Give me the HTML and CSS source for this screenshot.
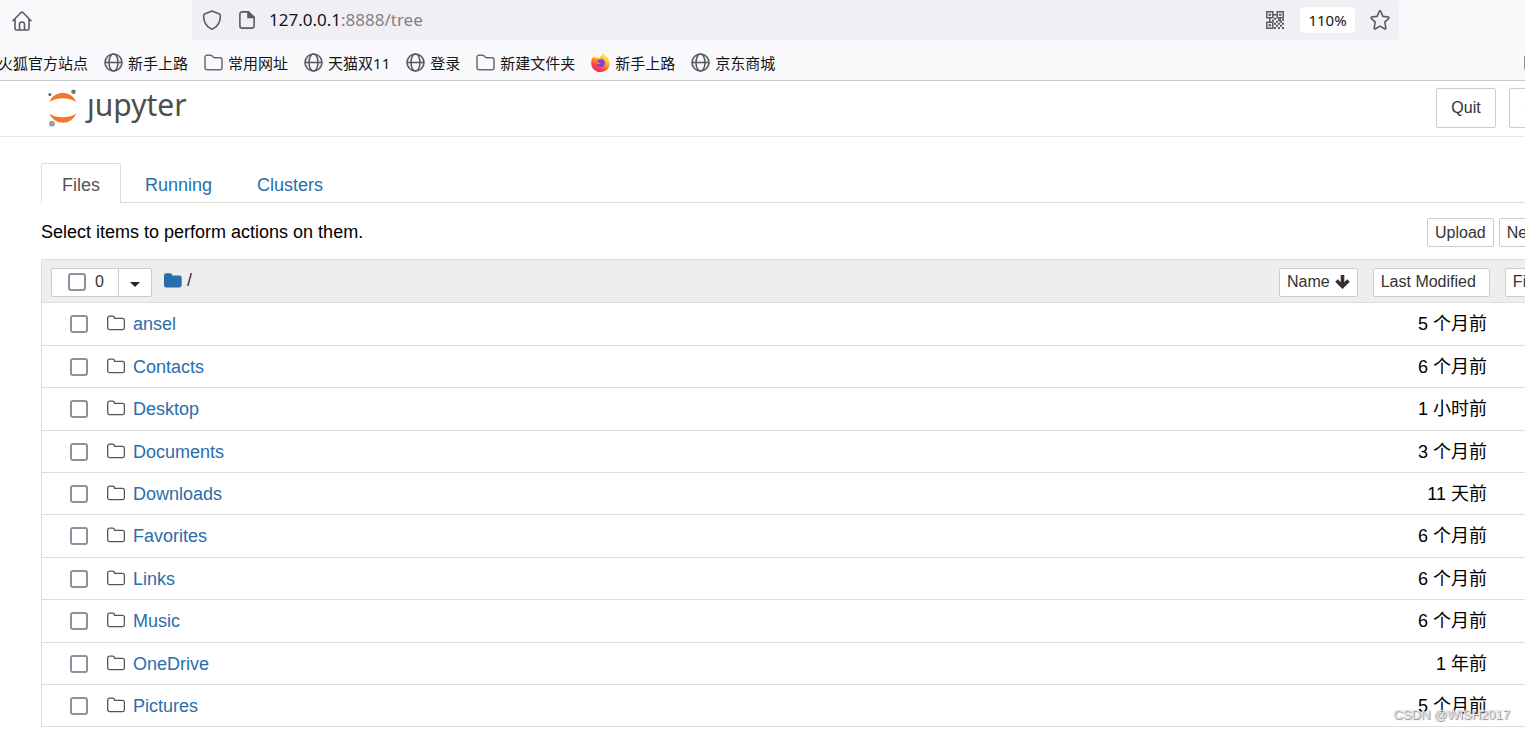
FILE: index.html
```
<!DOCTYPE html>
<html lang="zh-CN">
<head>
<meta charset="utf-8">
<title>Home Page - Select or create a notebook</title>
<link rel="stylesheet" href="styles.css">
</head>
<body>
<svg class="defs" aria-hidden="true">
  <symbol id="globe" viewBox="0 0 19 19"><g fill="none" stroke="#5b5b66" stroke-width="1.6"><circle cx="9.5" cy="9.5" r="8.5"/><ellipse cx="9.5" cy="9.5" rx="4.500" ry="8.5"/><path d="M1 9.5h17"/></g></symbol>
  <symbol id="dir" viewBox="0 0 19 19"><path d="M1 4.200a2 2 0 0 1 2-2h3.600q.8 0 1.400.6l1.400 1.400q.6.600 1.400.6H16a2 2 0 0 1 2 2v8a2 2 0 0 1-2 2H3a2 2 0 0 1-2-2z" fill="none" stroke="#6a6a74" stroke-width="1.500"/></symbol>
  <symbol id="folder-o" viewBox="0 0 18 16"><path d="M.7 3a1.900 1.900 0 0 1 1.900-1.900h3A1.900 1.900 0 0 1 7.500 3v.3h8a1.900 1.900 0 0 1 1.900 1.900v7.500a1.900 1.900 0 0 1-1.900 1.900H2.600a1.900 1.900 0 0 1-1.900-1.900z" fill="none" stroke="#555" stroke-width="1.300"/></symbol>
</svg>

<header class="chrome">
  <div class="nav-bar">
    <button class="icon-btn home" aria-label="Home">
      <svg width="20" height="20" viewBox="0 0 20 20" fill="none" stroke="#5b5b66" stroke-width="1.600" stroke-linejoin="round" stroke-linecap="round"><path d="M1 9.700 8.800 1.700a1.700 1.700 0 0 1 2.400 0L19 9.700M3 8v9.500a1.500 1.500 0 0 0 1.500 1.500h11a1.500 1.500 0 0 0 1.500-1.500V8M7.500 18.500v-5a2.500 2.500 0 0 1 5 0v5"/></svg>
    </button>
    <div class="url-bar">
      <svg width="20" height="20" viewBox="0 0 20 20" fill="none" stroke="#5b5b66" stroke-width="1.600" stroke-linejoin="round"><path d="M10 1 17.400 3.900q1 .4 1 1.500c0 5.600-1.900 10.600-7.400 13.400q-1 .5-2 0C3.500 16 1.600 11 1.600 5.400q0-1.100 1-1.500z"/></svg>
      <svg class="page-icon" width="16" height="18" viewBox="0 0 16 18" fill="none" stroke="#5b5b66" stroke-width="1.600"><path d="M9.500.9H3A2.100 2.100 0 0 0 .9 3v12A2.100 2.100 0 0 0 3 17.100h10a2.100 2.100 0 0 0 2.100-2.100V6.300z" stroke-linejoin="round"/><path d="M9 1v5.500h6z" fill="#5b5b66"/></svg>
      <span class="url"><b>127.0.0.1</b>:8888/tree</span>
      <svg width="18" height="18" viewBox="0 0 18 18" fill="none" stroke="#5b5b66" stroke-width="1.500"><path d="M.8.8h6v6h-6zM11.200.8h6v6h-6zM.8 11.200h6v6h-6zM7 3.800h4M3.800 7v4M14.200 7v4"/><path d="M3 3h1.600v1.600H3zM13.400 3H15v1.600h-1.600zM3 13.400h1.600V15H3z" stroke-width="1"/><path d="M8 7.800h2M12 8.800h2M16 8.800h2M6 9.800h2M10 10.800h2M14 10.800h2M8 12.800h2M12 12.800h2M16 12.800h2M10 14.800h2M14 14.800h2M8 17h2M12 17h2M16 17h2" stroke-width="2"/></svg>
      <button class="zoom">110%</button>
      <button class="icon-btn" aria-label="Bookmark this page"><svg width="20" height="20" viewBox="0 0 20 20" fill="none" stroke="#5b5b66" stroke-width="1.600" stroke-linejoin="round"><path d="M9.200 1.500q.8-1.200 1.600 0l2.100 4.900 5.400.6q1.200.3.400 1.400l-3.900 3.700 1 5.700q0 1.500-1.300.9L10 16.100l-4.500 2.600q-1.300.6-1.300-.9l1-5.700-3.900-3.700Q.5 7.300 1.700 7l5.400-.6z"/></svg></button>
    </div>
  </div>
  <nav class="bookmarks" aria-label="Bookmarks">
    <a href="#">火狐官方站点</a>
    <a href="#"><svg><use href="#globe"/></svg>新手上路</a>
    <a href="#"><svg><use href="#dir"/></svg>常用网址</a>
    <a href="#"><svg><use href="#globe"/></svg>天猫双11</a>
    <a href="#"><svg><use href="#globe"/></svg>登录</a>
    <a href="#"><svg><use href="#dir"/></svg>新建文件夹</a>
    <a href="#"><svg viewBox="0 0 19 19">
      <defs>
        <linearGradient id="fox" x1=".8" y1=".1" x2=".3" y2="1"><stop offset="0" stop-color="#fff44f"/><stop offset=".35" stop-color="#ffb52b"/><stop offset=".65" stop-color="#ff5a36"/><stop offset="1" stop-color="#f5156c"/></linearGradient>
      </defs>
      <path d="M12 0c1.500 1 2.100 2.200 2.400 3.400C17 5 18.800 7.300 18.800 10.500c0 4.800-4 8.500-9.200 8.500S.2 15.300.2 10.200C.2 7.500 1 5.500 2 4v1.500L3.600 3l.6 2c1.600-.6 3-.4 4.200.2C9.200 3 11.500 2.500 12 0z" fill="url(#fox)"/>
      <path d="M6.200 7.300c2-.7 3-.5 4.200-.2l-.8-1.300c3 0 4.600 2.200 4.200 4.700-.4 2.300-2.200 3.500-4.300 3.500-2.300 0-4-1.600-3.700-3.300 1 .8 2.500.8 4-.7-1.500-.3-3-.8-3.600-2.700z" fill="#7542e5"/>
    </svg>新手上路</a>
    <a href="#"><svg><use href="#globe"/></svg>京东商城</a>
    <a href="#" class="more" aria-label="Other bookmarks"><svg><use href="#dir"/></svg></a>
  </nav>
</header>

<div class="site-header">
  <a class="logo" href="#">
    <svg width="30" height="38" viewBox="0 0 30 38"><path d="M1.300 13A14.500 14.500 0 0 1 28.300 13 19 13 0 0 0 1.300 13zM1.300 24.500A14.500 14.500 0 0 0 28.300 24.500 19 13 0 0 1 1.300 24.500z" fill="#f37726"/><circle cx="25.500" cy="2.700" r="2.300" fill="#767677"/><circle cx="1.900" cy="5.500" r="1.500" fill="#616262"/><circle cx="4" cy="34.700" r="2.900" fill="#9e9e9e"/></svg>
    <span>ȷupyter</span>
  </a>
  <div class="session">
    <button class="btn">Quit</button>
    <button class="btn">Logout</button>
  </div>
</div>

<main class="tree">
  <nav class="tabs">
    <a class="active" href="#">Files</a>
    <a href="#">Running</a>
    <a href="#">Clusters</a>
  </nav>
  <div class="toolbar">
    <p>Select items to perform actions on them.</p>
    <div class="actions">
      <button class="btn small">Upload</button>
      <button class="btn small">New</button>
    </div>
  </div>
  <section class="list">
    <div class="list-header">
      <div class="select-group">
        <label class="select-all"><input type="checkbox"><span>0</span></label>
        <button class="caret" aria-label="Select by type"><svg width="10" height="5" viewBox="0 0 10 5"><path d="M0 0h10L5 5z" fill="#222"/></svg></button>
      </div>
      <a class="crumb" href="#" aria-label="Root folder"><svg width="18" height="15" viewBox="0 0 18 15"><path d="M0 2.500A2.300 2.300 0 0 1 2.300.2h3.600a2.300 2.300 0 0 1 2.300 2.200h7.200a2.300 2.300 0 0 1 2.300 2.300v7.500a2.300 2.300 0 0 1-2.300 2.300H2.300A2.300 2.300 0 0 1 0 12.200z" fill="#296eaa"/></svg></a>
      <span class="slash">/</span>
      <div class="sorts">
        <button class="btn small">Name <svg width="15" height="14" viewBox="0 0 15 14"><path d="M7.500 0v11M1.500 5.500l6 6 6-6" fill="none" stroke="#333" stroke-width="3.600"/></svg></button>
        <button class="btn small modified">Last Modified</button>
        <button class="btn small">File size</button>
      </div>
    </div>
    <div class="row"><input type="checkbox" aria-label="ansel"><svg><use href="#folder-o"/></svg><a href="#">ansel</a><time>5 个月前</time></div>
    <div class="row"><input type="checkbox" aria-label="Contacts"><svg><use href="#folder-o"/></svg><a href="#">Contacts</a><time>6 个月前</time></div>
    <div class="row"><input type="checkbox" aria-label="Desktop"><svg><use href="#folder-o"/></svg><a href="#">Desktop</a><time>1 小时前</time></div>
    <div class="row"><input type="checkbox" aria-label="Documents"><svg><use href="#folder-o"/></svg><a href="#">Documents</a><time>3 个月前</time></div>
    <div class="row"><input type="checkbox" aria-label="Downloads"><svg><use href="#folder-o"/></svg><a href="#">Downloads</a><time>11 天前</time></div>
    <div class="row"><input type="checkbox" aria-label="Favorites"><svg><use href="#folder-o"/></svg><a href="#">Favorites</a><time>6 个月前</time></div>
    <div class="row"><input type="checkbox" aria-label="Links"><svg><use href="#folder-o"/></svg><a href="#">Links</a><time>6 个月前</time></div>
    <div class="row"><input type="checkbox" aria-label="Music"><svg><use href="#folder-o"/></svg><a href="#">Music</a><time>6 个月前</time></div>
    <div class="row"><input type="checkbox" aria-label="OneDrive"><svg><use href="#folder-o"/></svg><a href="#">OneDrive</a><time>1 年前</time></div>
    <div class="row"><input type="checkbox" aria-label="Pictures"><svg><use href="#folder-o"/></svg><a href="#">Pictures</a><time>5 个月前</time></div>
  </section>
</main>
<div class="watermark">CSDN @WISH2017</div>
</body>
</html>
```
FILE: styles.css
```
* { box-sizing: border-box; }
html { overflow: hidden; }
body {
  margin: 0;
  overflow-x: hidden;
  background: #fff;
  color: #000;
  font: 18px/20px "Liberation Sans", "Noto Sans CJK SC", sans-serif;
}
a { color: #296eaa; text-decoration: none; }
svg { flex: none; display: block; }
button { font: inherit; margin: 0; cursor: pointer; }
.defs { position: absolute; width: 0; height: 0; }

input[type="checkbox"] {
  appearance: none;
  flex: none;
  width: 18px;
  height: 18px;
  margin: 0;
  border: 2px solid #8f8f9d;
  border-radius: 3px;
  background: #fff;
}

/* browser chrome */
.chrome {
  background: #f9f9fb;
  border-bottom: 1px solid #c8c8ca;
  font-family: "Noto Sans", "Noto Sans CJK SC", sans-serif;
}
.nav-bar { display: flex; height: 40px; }
.icon-btn { display: flex; align-items: center; padding: 0; border: 0; background: none; }
.home { width: 192px; padding: 2px 0 0 12px; }
.url-bar {
  flex: 1;
  display: flex;
  align-items: center;
  margin-right: 126px;
  padding: 0 9px 0 10px;
  background: #f0f0f4;
  border-radius: 4px;
}
.page-icon { margin: 0 14px 0 17px; }
.url { flex: 1; color: #808086; font-size: 17px; }
.url b { color: #15141a; font-weight: 400; }
.zoom {
  width: 55px;
  height: 26px;
  margin: 0 15px 0 16px;
  padding: 0;
  border: 0;
  border-radius: 4px;
  background: #fff;
  color: #15141a;
  font-size: 15px;
}
.bookmarks {
  display: flex;
  gap: 16px;
  height: 40px;
  margin-left: -2px;
  padding-top: 5px;
  font-size: 15px;
  white-space: nowrap;
}
.bookmarks a { display: flex; align-items: center; gap: 5px; color: #15141a; }
.bookmarks svg { width: 19px; height: 19px; }
.bookmarks .more { margin: 0 -18px 0 auto; }

/* notebook header */
.btn {
  flex: none;
  height: 40px;
  padding: 0 14px;
  border: 1px solid #ccc;
  border-radius: 2px;
  background: #fff;
  color: #333;
  font-size: 16px;
  white-space: nowrap;
}
.small { height: 29px; padding: 0 7px; }
.site-header {
  display: flex;
  justify-content: space-between;
  height: 56px;
  padding: 7px 0 0 48px;
  border-bottom: 1px solid #e7e7e7;
}
.logo { display: flex; gap: 9px; padding-top: 1px; color: #4e4e4e; }
.logo span { font: 30px/32px "Noto Sans", sans-serif; }
.session { display: flex; gap: 13px; width: 89px; }
.session .btn { min-width: 60px; }

/* file tree */
.tree { padding: 26px 0 0 41px; }
.tabs { display: flex; gap: 3px; border-bottom: 1px solid #ddd; }
.tabs a {
  margin-bottom: -1px;
  padding: 11px 20px 8px;
  border: 1px solid transparent;
  border-bottom: 0;
}
.tabs .active {
  border-color: #ddd;
  border-radius: 2px 2px 0 0;
  background: #fff;
  color: #555;
}
.toolbar { display: flex; justify-content: space-between; height: 56px; padding-top: 15px; }
.toolbar p { margin: 0; line-height: 28px; }
.actions { display: flex; gap: 5px; width: 98px; }
.list { border: solid #ddd; border-width: 1px 0 0 1px; border-radius: 2px 0 0; }
.list-header {
  display: flex;
  align-items: center;
  height: 43px;
  padding: 2px 0 0 9px;
  border-bottom: 1px solid #ddd;
  background: #eee;
}
.select-group { display: flex; height: 29px; border: 1px solid #ccc; border-radius: 2px; background: #fff; }
.select-all {
  display: flex;
  align-items: center;
  gap: 9px;
  padding: 0 14px 0 16px;
  border-right: 1px solid #ccc;
  font-size: 16px;
  color: #333;
}
.caret { width: 32px; padding: 4px 0 0 11px; border: 0; background: none; }
.crumb { margin: 0 5px 4px 12px; }
.slash { margin-bottom: 4px; color: #333; }
.sorts { display: flex; gap: 15px; width: 246px; margin-left: auto; }
.sorts .btn { display: flex; align-items: center; gap: 5px; }
.sorts .modified { padding-right: 13px; }
.row {
  display: flex;
  align-items: center;
  height: 42px;
  padding: 0 38px 0 28px;
  border-bottom: 1px solid #ddd;
}
.row:nth-child(5n+2), .row:nth-child(5n+4) { height: 43px; }
.row svg { width: 18px; height: 16px; margin: 0 8px 2px 19px; }
.row time { margin-left: auto; }

.watermark {
  position: absolute;
  right: 15px;
  bottom: 5px;
  color: #fffc;
  font-size: 13px;
  text-shadow: 1px 1px 1px #888, 0 0 1px #999;
}
```
